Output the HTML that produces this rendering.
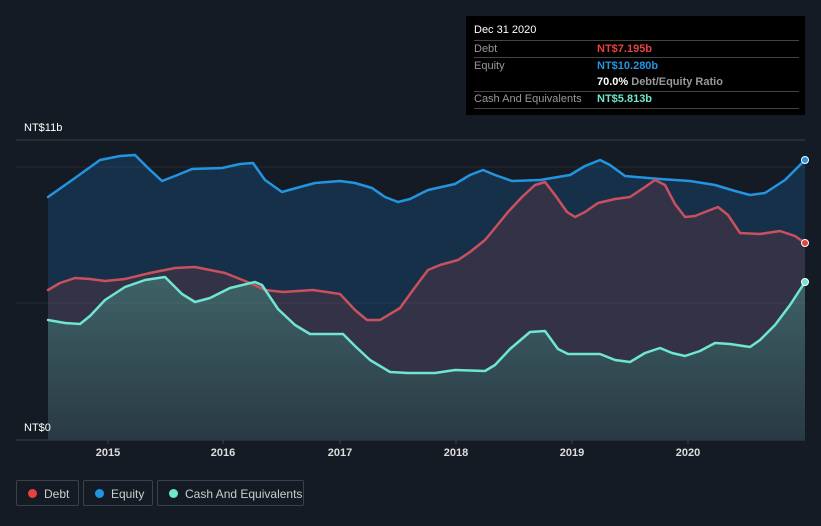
<!DOCTYPE html>
<html><head><style>
body{margin:0;width:821px;height:526px;background:#151b24;font-family:"Liberation Sans",sans-serif;overflow:hidden;position:relative}
.tt{position:absolute;left:466px;top:16px;width:339px;height:99px;background:#000;color:#fff;font-size:11px}
.row{position:absolute;left:8px;width:325px;border-top:1px solid #444}
.l{position:absolute;left:0;color:#999}
.v{position:absolute;left:123px;font-weight:bold}
.leg{position:absolute;top:480px;height:26px;border:1px solid #3a414c;border-radius:2px;color:#ccc;font-size:12px;line-height:26px;box-sizing:border-box}
.leg i{position:absolute;left:11px;top:8px;width:9px;height:9px;border-radius:50%}
.leg span{position:absolute;left:27px}
.yr{position:absolute;top:447px;color:#ddd;font-size:11px;font-weight:bold;width:40px;text-align:center}
polyline{stroke-linejoin:round;stroke-linecap:round}
</style></head><body>
<svg width="821" height="526" style="position:absolute;left:0;top:0">
<defs><linearGradient id="cg" x1="0" y1="0" x2="0" y2="1"><stop offset="0" stop-color="#3e6266"/><stop offset="1" stop-color="#2a3a44"/></linearGradient></defs>
<line x1="16" y1="140" x2="805" y2="140" stroke="#3a414c"/>
<line x1="16" y1="440" x2="805" y2="440" stroke="#3a414c"/>
<polygon fill="#16304a" points="48,440 48,197 75,178 100,160 120,156 135,155 148,168 162,181 175,176 192,169 222,168 240,164 253,163 265,180 282,192 300,187 315,183 340,181 355,183 372,188 385,197 398,202 410,199 428,190 455,184 470,175 483,170 495,175 512,181 540,180 570,175 585,166 600,160 610,165 625,176 660,179 690,181 715,185 735,191 750,195 765,193 785,180 805,160 805,440"/>
<polygon fill="#3a3247" fill-opacity="0.85" points="48,440 48,290 60,283 75,278 90,279 105,281 125,279 150,273 175,268 195,267 225,273 250,283 265,290 283,292 313,290 340,294 355,310 367,320 380,320 400,308 413,290 428,270 440,265 458,260 470,252 485,240 495,228 508,212 522,197 535,185 545,182 555,195 567,212 575,217 585,212 598,203 615,199 630,197 645,187 655,180 665,185 675,204 685,217 695,216 705,212 718,207 728,215 740,233 760,234 780,231 795,236 805,243 805,440"/>
<polygon fill="url(#cg)" points="48,440 48,320 65,323 80,324 90,316 105,300 125,287 145,280 165,277 182,294 195,302 210,298 230,288 255,282 262,285 278,309 295,325 310,334 343,334 355,346 370,360 390,372 408,373 435,373 455,370 485,371 495,365 510,349 530,332 545,331 558,349 568,354 600,354 615,360 630,362 645,353 660,348 672,353 685,356 700,351 715,343 730,344 750,347 760,340 775,325 790,305 805,282 805,440"/>
<line x1="16" y1="167" x2="805" y2="167" stroke="#ffffff" stroke-opacity="0.06"/>
<line x1="16" y1="303" x2="805" y2="303" stroke="#ffffff" stroke-opacity="0.06"/>
<polyline fill="none" stroke="#2394df" stroke-width="2.5" points="48,197 75,178 100,160 120,156 135,155 148,168 162,181 175,176 192,169 222,168 240,164 253,163 265,180 282,192 300,187 315,183 340,181 355,183 372,188 385,197 398,202 410,199 428,190 455,184 470,175 483,170 495,175 512,181 540,180 570,175 585,166 600,160 610,165 625,176 660,179 690,181 715,185 735,191 750,195 765,193 785,180 805,160"/>
<polyline fill="none" stroke="#c9505f" stroke-width="2.5" points="48,290 60,283 75,278 90,279 105,281 125,279 150,273 175,268 195,267 225,273 250,283 265,290 283,292 313,290 340,294 355,310 367,320 380,320 400,308 413,290 428,270 440,265 458,260 470,252 485,240 495,228 508,212 522,197 535,185 545,182 555,195 567,212 575,217 585,212 598,203 615,199 630,197 645,187 655,180 665,185 675,204 685,217 695,216 705,212 718,207 728,215 740,233 760,234 780,231 795,236 805,243"/>
<polyline fill="none" stroke="#6ee6d0" stroke-width="2.5" points="48,320 65,323 80,324 90,316 105,300 125,287 145,280 165,277 182,294 195,302 210,298 230,288 255,282 262,285 278,309 295,325 310,334 343,334 355,346 370,360 390,372 408,373 435,373 455,370 485,371 495,365 510,349 530,332 545,331 558,349 568,354 600,354 615,360 630,362 645,353 660,348 672,353 685,356 700,351 715,343 730,344 750,347 760,340 775,325 790,305 805,282"/>
<circle cx="805" cy="160" r="3.5" fill="#2394df" stroke="#fff" stroke-width="1"/>
<circle cx="805" cy="243" r="3.5" fill="#e84142" stroke="#fff" stroke-width="1"/>
<circle cx="805" cy="282" r="3.5" fill="#6ee6d0" stroke="#fff" stroke-width="1"/>
<g stroke="#3a414c"><line x1="108" y1="440" x2="108" y2="444"/><line x1="223" y1="440" x2="223" y2="444"/><line x1="340" y1="440" x2="340" y2="444"/><line x1="456" y1="440" x2="456" y2="444"/><line x1="572" y1="440" x2="572" y2="444"/><line x1="688" y1="440" x2="688" y2="444"/></g>
</svg>
<div style="position:absolute;left:24px;top:122px;color:#fff;font-size:11px">NT$11b</div>
<div style="position:absolute;left:24px;top:422px;color:#fff;font-size:11px">NT$0</div>
<div class="yr" style="left:88px">2015</div><div class="yr" style="left:203px">2016</div><div class="yr" style="left:320px">2017</div><div class="yr" style="left:436px">2018</div><div class="yr" style="left:552px">2019</div><div class="yr" style="left:668px">2020</div>
<div class="tt">
<div style="position:absolute;left:8px;top:8px">Dec 31 2020</div>
<div class="row" style="top:24px;height:16px"><span class="l" style="top:2px">Debt</span><span class="v" style="top:2px;color:#e84142">NT$7.195b</span></div>
<div class="row" style="top:41px;height:33px"><span class="l" style="top:2px">Equity</span><span class="v" style="top:2px;color:#2394df">NT$10.280b</span><span class="v" style="top:18px;color:#fff">70.0% <span style="color:#999">Debt/Equity Ratio</span></span></div>
<div class="row" style="top:75px;height:16px;border-bottom:1px solid #444"><span class="l" style="top:1px">Cash And Equivalents</span><span class="v" style="top:1px;color:#6ee6d0">NT$5.813b</span></div>
</div>
<div class="leg" style="left:16px;width:63px"><i style="background:#e84142"></i><span>Debt</span></div>
<div class="leg" style="left:83px;width:70px"><i style="background:#2394df"></i><span>Equity</span></div>
<div class="leg" style="left:157px;width:147px"><i style="background:#6ee6d0"></i><span>Cash And Equivalents</span></div>
</body></html>
